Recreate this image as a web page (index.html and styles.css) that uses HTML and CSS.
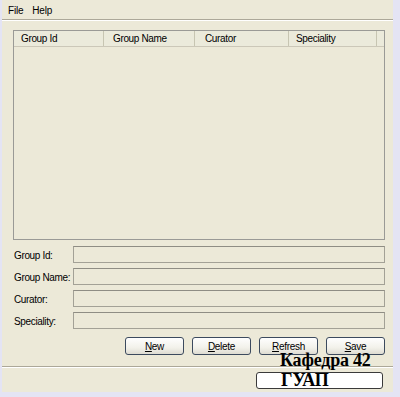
FILE: index.html
```html
<!DOCTYPE html>
<html>
<head>
<meta charset="utf-8">
<link rel="stylesheet" href="styles.css">
</head>
<body>
<div class="window">
  <div class="menubar">
    <span class="menu-item">File</span>
    <span class="menu-item">Help</span>
  </div>
  <div class="content">
    <div class="table">
      <div class="thead">
        <div class="th c1">Group Id</div>
        <div class="th c2">Group Name</div>
        <div class="th c3">Curator</div>
        <div class="th c4">Speciality</div>
        <div class="th c5"></div>
      </div>
    </div>
    <div class="form">
      <div class="row"><label class="lbl">Group Id:</label><div class="field"></div></div>
      <div class="row"><label class="lbl">Group Name:</label><div class="field"></div></div>
      <div class="row"><label class="lbl">Curator:</label><div class="field"></div></div>
      <div class="row"><label class="lbl">Speciality:</label><div class="field"></div></div>
    </div>
    <div class="buttons">
      <button class="btn"><u>N</u>ew</button>
      <button class="btn"><u>D</u>elete</button>
      <button class="btn"><u>R</u>efresh</button>
      <button class="btn"><u>S</u>ave</button>
    </div>
  </div>
  <div class="status"></div>
  <div class="stamp-title">Кафедра 42</div>
  <div class="stamp-box">ГУАП</div>
</div>
</body>
</html>
```

FILE: styles.css
```css
html, body {
  margin: 0;
  padding: 0;
  background: #e4e4f4;
}
body {
  width: 400px;
  height: 397px;
  overflow: hidden;
  font-family: "Liberation Sans", Arial, sans-serif;
  font-size: 10px;
  color: #000;
}
.window {
  position: relative;
  margin-left: 2px;
  width: 391px;
  height: 392px;
  background: #ece9d8;
  display: flex;
  flex-direction: column;
}
.menubar {
  display: flex;
  align-items: center;
  gap: 9px;
  padding-left: 6px;
  padding-top: 1px;
  box-sizing: border-box;
  height: 20px;
  border-bottom: 1px solid #aca899;
  box-shadow: 0 1px 0 #ffffff;
  letter-spacing: -0.2px;
}
.content {
  padding: 10px 8px 0 11px;
  display: flex;
  flex-direction: column;
}
.table {
  height: 208px;
  border: 1px solid #9a9a96;
  background: #ece9d8;
}
.thead {
  display: flex;
  height: 15px;
  border-bottom: 1px solid #cbc7b8;
  background: #ebeadb;
}
.th {
  box-sizing: border-box;
  padding-left: 7px;
  line-height: 16px;
  border-right: 1px solid #c7c5b2;
  letter-spacing: -0.35px;
  white-space: nowrap;
}
.c1 { width: 91px; }
.c2 { width: 92px; padding-left: 9px; }
.c3 { width: 95px; padding-left: 10px; }
.c4 { width: 89px; }
.c5 { flex: 1; border-right: none; }
.form {
  margin-top: 6px;
  display: flex;
  flex-direction: column;
  gap: 5px;
}
.row {
  display: flex;
  align-items: center;
  height: 17px;
}
.lbl {
  width: 59px;
  padding-left: 1px;
  padding-top: 2px;
  letter-spacing: -0.35px;
  white-space: nowrap;
}
.field {
  flex: 1;
  height: 15px;
  border: 1px solid #a3a196;
  border-top-color: #8f8d84;
  background: #ece9d8;
}
.buttons {
  margin-top: 8px;
  display: flex;
  justify-content: flex-end;
  gap: 8px;
}
.btn {
  width: 59px;
  height: 18px;
  padding: 1px 0 0;
  border: 1px solid #3c4a5e;
  border-radius: 3px;
  background: linear-gradient(#fefefe, #f2f1ea 60%, #dedcd2);
  font-family: "Liberation Sans", Arial, sans-serif;
  font-size: 10px;
  letter-spacing: -0.3px;
  color: #000;
}
.status {
  margin-top: 11px;
  border-top: 1px solid #aca899;
  box-shadow: 0 1px 0 #ffffff inset;
  flex: 1;
}
.stamp-title {
  position: absolute;
  left: 278px;
  top: 350px;
  font-family: "Liberation Serif", "Times New Roman", serif;
  font-weight: bold;
  font-size: 18px;
  line-height: 20px;
  color: #000;
  letter-spacing: -0.2px;
}
.stamp-box {
  position: absolute;
  left: 254px;
  top: 372px;
  box-sizing: border-box;
  width: 127px;
  height: 17px;
  padding-left: 24px;
  border: 1.5px solid #3a3a3a;
  border-radius: 3px;
  background: #fff;
  font-family: "Liberation Serif", "Times New Roman", serif;
  font-weight: bold;
  font-size: 18px;
  line-height: 14px;
  color: #000;
}
```
